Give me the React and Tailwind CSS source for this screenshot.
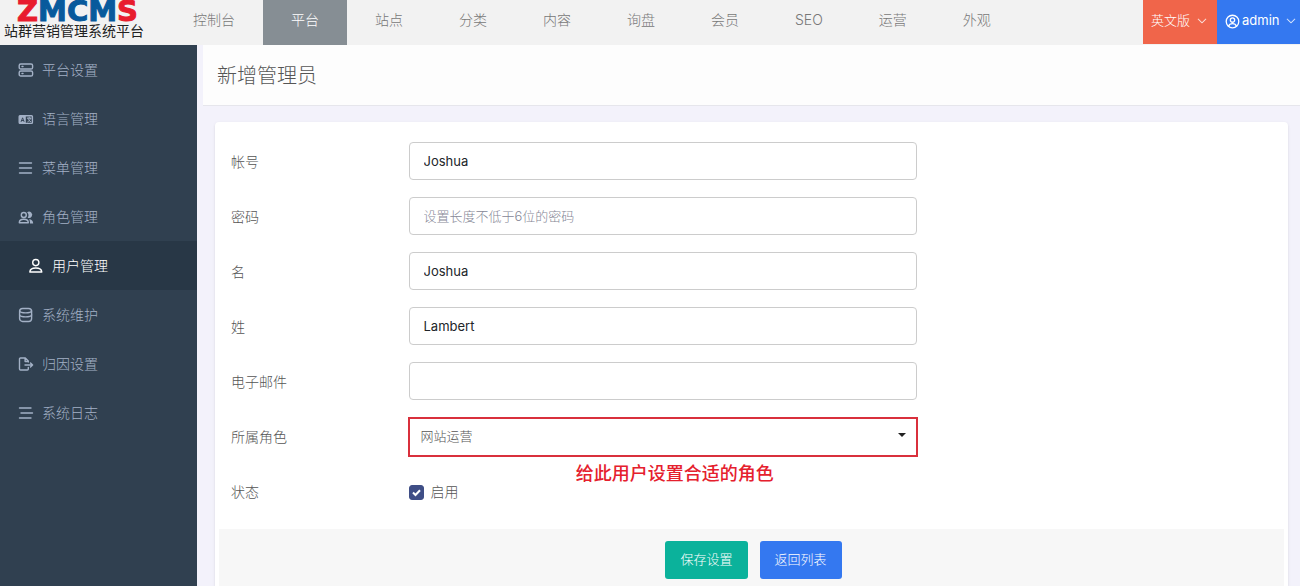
import React from "react";
import { BsChevronDown } from "react-icons/bs";

function Icon({ children, className = "size-4" }) {
  return (
    <svg
      viewBox="0 0 16 16"
      className={className + " shrink-0"}
      fill="none"
      stroke="currentColor"
      strokeWidth="1.4"
      strokeLinecap="round"
      strokeLinejoin="round"
      aria-hidden="true"
    >
      {children}
    </svg>
  );
}

const icons = {
  server: (
    <>
      <rect x="1.2" y="2" width="13.400" height="5" rx="1.6" />
      <rect x="1.2" y="9" width="13.400" height="5" rx="1.6" />
      <path d="M4 4.5h1M4 11.5h1" />
    </>
  ),
  language: (
    <>
      <rect x="1.2" y="4.7" width="13.2" height="7.7" rx="0.8" />
      <rect x="1.2" y="4.7" width="6.6" height="7.7" fill="currentColor" stroke="none" />
      <path d="M3.2 10.5l1.4-3.700 1.4 3.700M3.700 9.500h1.800" stroke="#304050" strokeWidth="0.9" />
      <path d="M9.300 7.100h3.800M11.200 6.100v1M9.800 10.800c1.500-.8 2.400-1.900 2.600-3.500M10 7.500c.4 1.600 1.400 2.600 2.800 3.300" strokeWidth="1" />
    </>
  ),
  list: <path d="M1.500 3h12M1.500 8h12M1.500 13h12" />,
  roles: (
    <>
      <circle cx="5.800" cy="6" r="2.500" />
      <path d="M1.300 13.800c0-2.300 1.800-3.500 4.500-3.500s4.500 1.200 4.500 3.500z" />
      <path
        d="M9.100 3.200a3.200 3.200 0 1 1 .6 5.500c.5-.7.8-1.500.8-2.500s-.5-2.200-1.400-3zM11 10.200c2.600.2 4.200 1.600 4.200 4.200h-3.200c0-1.800-.2-3.100-1-4.200z"
        fill="currentColor"
        stroke="none"
      />
    </>
  ),
  user: (
    <>
      <circle cx="7.800" cy="4.600" r="3.100" />
      <path d="M1.800 14c.2-2.800 2.300-4 6-4s5.800 1.200 6 4z" />
    </>
  ),
  database: (
    <>
      <rect x="1.600" y="1.500" width="12" height="13" rx="3" />
      <path d="M1.600 4c.5 1.300 2.500 1.900 6 1.900s5.500-.6 6-1.900M1.600 8c.5 1.300 2.500 1.900 6 1.900s5.500-.6 6-1.900" />
    </>
  ),
  exit: (
    <>
      <path d="M10.300 6V5L7.300 2H2.500a1 1 0 0 0-1 1v10a1 1 0 0 0 1 1h6.800a1 1 0 0 0 1-1v-1.500M7.100 2.200v3.300h3" />
      <path d="M7 9h7.600M12.500 7L14.600 9l-2.100 2" />
    </>
  ),
  logs: <path d="M1.500 3h11.500M3 8h11.500M1.500 13h11.500" />,
};

const menu = [
  ["平台设置", "server"],
  ["语言管理", "language"],
  ["菜单管理", "list"],
  ["角色管理", "roles"],
  ["用户管理", "user"],
  ["系统维护", "database"],
  ["归因设置", "exit"],
  ["系统日志", "logs"],
];

const tabs = ["控制台", "平台", "站点", "分类", "内容", "询盘", "会员", "SEO", "运营", "外观"];

const fields = [
  { id: "account", label: "帐号", value: "Joshua" },
  { id: "password", label: "密码", type: "password", placeholder: "设置长度不低于6位的密码" },
  { id: "first", label: "名", value: "Joshua" },
  { id: "last", label: "姓", value: "Lambert" },
  { id: "email", label: "电子邮件", type: "email" },
];

function Row({ id, label, children }) {
  return (
    <div className="flex h-[38px] items-start">
      <label htmlFor={id} className="w-2/12 px-3 pt-1 text-sm leading-8 text-[#555]">
        {label}
      </label>
      <div className="w-6/12 px-3">{children}</div>
    </div>
  );
}

function Header() {
  return (
    <header className="flex h-[45px] bg-[#f2f2f2]">
      <a href="#" className="flex w-[165px] shrink-0 flex-col pl-1">
        <svg
          viewBox="0 0 130 22"
          className="ml-3 h-[22px] w-[130px] fill-[#085a9c] stroke-[#085a9c] font-['DejaVu_Sans',sans-serif] text-[29px] font-bold"
        >
          <text x="1" y="21">
            <tspan className="fill-[#e81c2e] stroke-[#e81c2e]">Z</tspan>
            <tspan>MCM</tspan>
            <tspan className="fill-[#e81c2e] stroke-[#e81c2e]">S</tspan>
          </text>
        </svg>
        <span className="text-sm leading-[18px] font-normal text-[#222]">站群营销管理系统平台</span>
      </a>
      <nav className="flex">
        {tabs.map((t) => (
          <a
            key={t}
            href="#"
            className={
              "px-7 text-sm leading-10 whitespace-nowrap " +
              (t === "平台" ? "bg-[#868e94] text-white" : "text-[#777]")
            }
          >
            {t}
          </a>
        ))}
      </nav>
      <div className="ml-auto flex h-11 text-[13px] text-white">
        <button className="flex w-[74px] items-center justify-between bg-[#f0654a] pr-[10px] pb-[2px] pl-2">
          英文版
          <BsChevronDown className="size-[10px] stroke-[0.5]" />
        </button>
        <button className="flex w-[83px] items-center gap-[2px] bg-[#3478f0] pb-[2px] pl-2 font-normal">
          <Icon className="size-[15px]">
            <circle cx="8" cy="8" r="6.700" />
            <circle cx="8" cy="6.500" r="2.300" />
            <path d="M3.800 13c.6-1.900 2-2.700 4.200-2.700s3.600.8 4.200 2.700" />
          </Icon>
          admin
          <BsChevronDown className="mr-1 ml-auto size-[10px] stroke-[0.5]" />
        </button>
      </div>
    </header>
  );
}

function Sidebar() {
  return (
    <aside className="w-[197px] shrink-0 bg-[#304050]">
      <nav className="flex flex-col">
        {menu.map(([name, icon]) => (
          <a
            key={name}
            href="#"
            className={
              "flex h-[49px] items-center gap-2 text-sm " +
              (icon === "user" ? "bg-[#283746] pl-7 text-white" : "pl-[18px] text-[#a3b1c6]")
            }
          >
            <Icon>{icons[icon]}</Icon>
            {name}
          </a>
        ))}
      </nav>
    </aside>
  );
}

export default function App() {
  return (
    <div className="flex min-h-screen flex-col bg-[#f3f2fb] font-[Inter,'Noto_Sans_CJK_SC',sans-serif] font-light">
      <Header />
      <div className="flex flex-1">
        <Sidebar />
        <main className="flex min-w-0 flex-1 flex-col pl-[6px]">
          <h1 className="border-b border-[#e6e6ec] bg-[#fdfdfd] px-[14px] pt-[2px] text-xl leading-[58px] text-[#555]">
            新增管理员
          </h1>
          <form className="mx-3 mt-4 flex flex-1 flex-col rounded-t bg-white px-1 pt-5 shadow-sm">
            <div className="flex flex-col gap-[17px]">
              {fields.map((f) => (
                <Row key={f.id} id={f.id} label={f.label}>
                  <input
                    id={f.id}
                    type={f.type || "text"}
                    defaultValue={f.value}
                    placeholder={f.placeholder}
                    className="block h-[38px] w-full rounded border border-[#ccc] bg-white px-[14px] text-[13px] font-normal text-[#212529] placeholder:font-light placeholder:text-[#858796]"
                  />
                </Row>
              ))}
              <Row id="role" label="所属角色">
                <div className="relative -mx-px">
                  <select
                    id="role"
                    className="block h-10 w-full appearance-none border-2 border-[#d9303c] bg-white px-[11px] text-[13px] text-[#555]"
                  >
                    <option>网站运营</option>
                  </select>
                  <svg
                    viewBox="0 0 8 4"
                    className="pointer-events-none absolute top-4 right-3 h-1 w-2 fill-[#222]"
                    aria-hidden="true"
                  >
                    <path d="M0 0h8L4 4z" />
                  </svg>
                  <p className="absolute inset-x-0 top-full pt-1 pl-6 text-center text-lg leading-[26px] font-medium text-[#e5202d]">
                    给此用户设置合适的角色
                  </p>
                </div>
              </Row>
              <Row id="status" label="状态">
                <label className="relative flex w-fit items-center gap-[7px] pt-1 text-sm leading-8 text-[#555]">
                  <input
                    id="status"
                    type="checkbox"
                    defaultChecked
                    className="peer size-[15px] appearance-none rounded-[3px] border border-[#3f4e86] checked:bg-[#3f4e86]"
                  />
                  <svg
                    viewBox="0 0 15 15"
                    className="pointer-events-none invisible absolute left-0 size-[15px] fill-none stroke-white stroke-2 peer-checked:visible"
                    aria-hidden="true"
                  >
                    <path d="M4 7.500l2.500 2.500L11 5.200" />
                  </svg>
                  启用
                </label>
              </Row>
            </div>
            <div className="mt-[19px] flex flex-1 justify-center gap-3 bg-[#f7f7f7] pt-3 pb-2 pl-1 text-[13px] text-white">
              <button type="submit" className="h-[38px] rounded-[3px] bg-[#0bb29b] px-[15px]">
                保存设置
              </button>
              <button type="button" className="h-[38px] rounded-[3px] bg-[#3478f0] px-[15px]">
                返回列表
              </button>
            </div>
          </form>
        </main>
      </div>
    </div>
  );
}
